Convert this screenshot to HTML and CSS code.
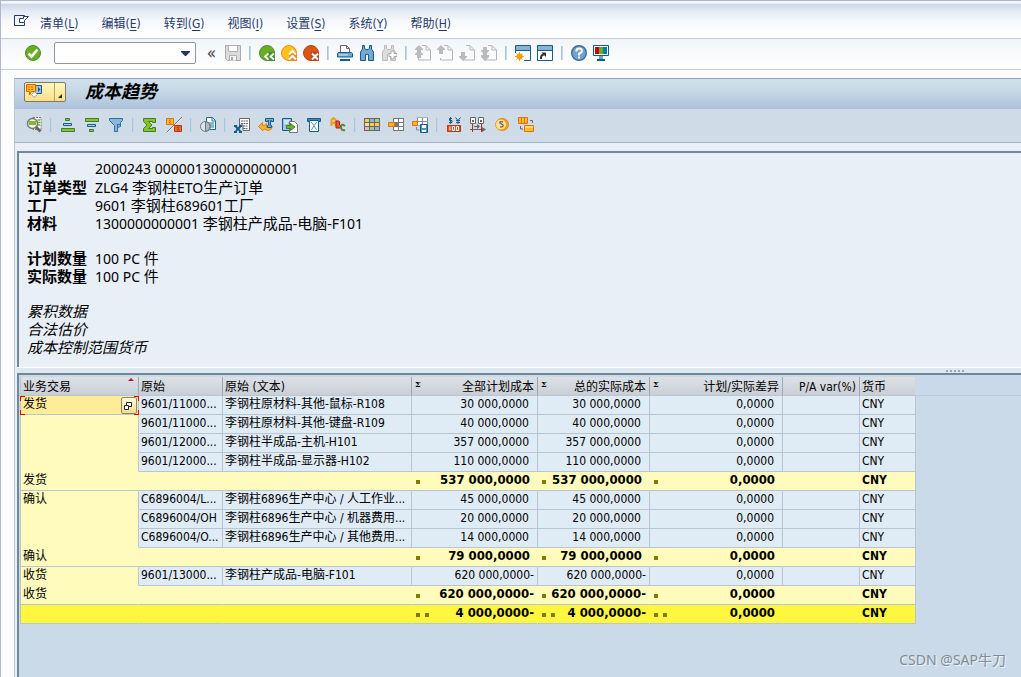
FILE: index.html
```html
<!DOCTYPE html>
<html lang="zh-CN">
<head>
<meta charset="utf-8">
<title>成本趋势</title>
<link rel="stylesheet" href="styles.css">
</head>
<body>
<svg class="defs" aria-hidden="true">
  <symbol id="doc" viewBox="0 0 16 16"><path d="M7 .5h4l4.500 4.500v10H3.500V13M11 1v4h4" fill="none" stroke="#b5b5b5"/></symbol>
  <symbol id="sigma" viewBox="0 0 16 16"><path d="M1.500 1.500h12v4h-3v-1h-4L10 8l-3.500 3.500h4v-1h3v4h-12v-3L5 8 1.500 4.500z" fill="#8cc21f" stroke="#3f7d3b"/></symbol>
</svg>

<nav class="menubar">
  <svg class="exit" viewBox="0 0 16 14"><path d="M10.500 2.500V1.500H.5v10h10V9" fill="none" stroke="#24386b"/><path d="M5.500 8.500v-4h4v-2h5l-4 4v2z" fill="#fff" stroke="#24386b"/></svg>
  <button>清单(<u>L</u>)</button>
  <button>编辑(<u>E</u>)</button>
  <button>转到(<u>G</u>)</button>
  <button>视图(<u>I</u>)</button>
  <button>设置(<u>S</u>)</button>
  <button>系统(<u>Y</u>)</button>
  <button>帮助(<u>H</u>)</button>
</nav>

<div class="toolbar system">
  <button aria-label="确认"><svg viewBox="0 0 16 16"><circle cx="8" cy="8" r="7.500" fill="#66b020" stroke="#4b8a37"/><path d="M3.500 8.500l3 3 6-7" fill="none" stroke="#fff" stroke-width="2.600"/></svg></button>
  <div class="combo"><input type="text" aria-label="命令"><button aria-label="命令历史"><svg viewBox="0 0 9 5"><path d="M0 0h9v1L5 5H4L0 1z" fill="#24386b"/></svg></button></div>
  <button class="collapse" aria-label="折叠">«</button>
  <button aria-label="保存"><svg viewBox="0 0 16 16"><path d="M.5.5h15v15H2.500l-2-2z" fill="#dcdcdc" stroke="#aaa"/><path d="M3.500.5h9v6h-9z" fill="#fff" stroke="#b0b0b0"/><path d="M4.500 15.500v-5h7v5" fill="#f4f4f4" stroke="#b0b0b0"/><path d="M6 12h2v3H6z" fill="#aaa"/></svg></button>
  <i class="sep"></i>
  <button aria-label="返回"><svg viewBox="0 0 16 16"><circle cx="8" cy="8" r="7.500" fill="#66b020" stroke="#4b8a37"/><path d="M9 7h7v9H9z" fill="#4b8a37"/><path d="M9.500 8.500l-3.500 3 3.500 3M15 8.500l-3.500 3 3.500 3" fill="none" stroke="#fff" stroke-width="1.800"/></svg></button>
  <button aria-label="退出"><svg viewBox="0 0 16 16"><circle cx="8" cy="8" r="7.500" fill="#fdc21a" stroke="#ec8a19"/><path d="M8 8l3.500-3L16 8v8H8z" fill="#ec8a19"/><path d="M8 9.500l3.500-3.500L15 9.500M8 14.500l3.500-3.500 3.500 3.500" fill="none" stroke="#fff" stroke-width="2"/></svg></button>
  <button aria-label="取消"><svg viewBox="0 0 16 16"><circle cx="8" cy="8" r="7.500" fill="#d95515" stroke="#b8431c"/><path d="M8 7h8v9H8z" fill="#b8431c"/><path d="M9 8.500l6 6m0-6l-6 6" stroke="#fff" stroke-width="2"/></svg></button>
  <i class="sep"></i>
  <button aria-label="打印"><svg viewBox="0 0 16 16"><path d="M3.500 7.500v-7h6l3 3v4" fill="#fff" stroke="#666"/><path d="M9.500.5v3h3" fill="none" stroke="#666"/><path d="M.5 12V8.500l1-1h13l1 1V12z" fill="#7ba7ce" stroke="#0f5f8d"/><path d="M2 10h9" stroke="#d7e6f2"/><path d="M3 14h10v2H3z" fill="#0f5f8d"/></svg></button>
  <button aria-label="查找"><svg viewBox="0 0 16 16"><path d="M3.500.5h2v3l1.500 1h2l1.500-1v-3h2V4l2 3v8.500H9.500v-6h-3v6h-5V7l2-3z" fill="#7ba7ce" stroke="#0f5f8d"/></svg></button>
  <button aria-label="继续查找"><svg viewBox="0 0 16 16"><path d="M3.500.5h2v3l1.500 1h2l1.500-1v-3h2V4l2 3v8.500H9.500v-6h-3v6h-5V7l2-3z" fill="#ddd" stroke="#bcbcbc"/><path d="M10 6h3v2.500h3v3h-3V14h-3v-2.500H8v-3h2z" fill="#fff" stroke="#aaa"/></svg></button>
  <i class="sep"></i>
  <button aria-label="首页"><svg viewBox="0 0 16 16"><use href="#doc"/><path d="M4 0l4 4v1H6v2l2 2v1H6v3H2v-3H0V9l2-2V5H0V4z" fill="#bbb"/></svg></button>
  <button aria-label="上页"><svg viewBox="0 0 16 16"><use href="#doc"/><path d="M4 0l4 4v1H6v4H2V5H0V4z" fill="#bbb"/></svg></button>
  <button aria-label="下页"><svg viewBox="0 0 16 16"><use href="#doc"/><path d="M2 7h4v4h2v1l-4 4-4-4v-1h2z" fill="#bbb"/></svg></button>
  <button aria-label="末页"><svg viewBox="0 0 16 16"><use href="#doc"/><path d="M2 2h4v3h2v1L6 8v2h2v2l-4 4-4-4v-2h2V8L0 6V5h2z" fill="#bbb"/></svg></button>
  <i class="sep"></i>
  <button aria-label="新会话"><svg viewBox="0 0 16 16"><path d="M.5.5h15v15H9M.5.5V8" fill="#fff" stroke="#0f5f8d"/><path d="M1 1h14v4H1z" fill="#8ab2d6"/><path d="M0 5.500h16" stroke="#0f5f8d"/><circle cx="4.500" cy="11.500" r="3" fill="#f6a000"/><path d="M4.500 7v9M0 11.500h9M1.500 8.500l6 6m0-6l-6 6" stroke="#f6a000"/></svg></button>
  <button aria-label="快捷方式"><svg viewBox="0 0 16 16"><path d="M.5.5h15v15H.5z" fill="#fff" stroke="#0f5f8d"/><path d="M1 1h14v4H1z" fill="#8ab2d6"/><path d="M0 5.500h16" stroke="#0f5f8d"/><path d="M4 14q-.5-4 3-4.500" fill="none" stroke="#333" stroke-width="2"/><path d="M4.500 7.500H9V12z" fill="#333"/></svg></button>
  <i class="sep"></i>
  <button aria-label="帮助"><svg viewBox="0 0 16 16"><circle cx="8" cy="8" r="7.300" fill="#72a2cb" stroke="#326f9f" stroke-width="1.400"/><path d="M5.300 6.500q0-3 2.800-3t2.800 2.300T8 8.500v2M8 11.500v2" fill="none" stroke="#fff" stroke-width="1.900"/></svg></button>
  <button aria-label="定制布局"><svg viewBox="0 0 16 16"><path d="M.5.500h15v10H.5z" fill="#fff" stroke="#0f5f8d"/><path d="M2 2h4v7H2z" fill="#c00"/><path d="M6 2h4v7H6z" fill="#69b017"/><path d="M10 2h4v7h-4z" fill="#0a78bd"/><path d="M6 11h4v3H6z" fill="#6ba1cc"/><path d="M4 15h8" stroke="#0f5f8d" stroke-width="2"/></svg></button>
</div>

<main class="workspace">
  <header class="titlebar">
    <button class="objects" aria-label="对象服务"><svg class="obj" viewBox="0 0 17 14"><path d="M9.500 1.500h6v8h-6z" fill="#9cc3df" stroke="#0f5f8d"/><path d="M12 3l2.500 2.500L12 8z" fill="#0f5f8d"/><path d="M.5.5h9v7h-4l-2 3.500V7.500h-3z" fill="#fdc21a" stroke="#e05a12"/><path d="M2 3h6M2 5.500h6" stroke="#e05a12" stroke-dasharray="2 1"/><path d="M5.500 10.500l3.500-3 2.500 3-3.500 3z" fill="#fff" stroke="#9e9e9e"/></svg><span class="drop"><svg viewBox="0 0 4 4"><path d="M4 0v4H0z" fill="#222"/></svg></span></button>
    <h1>成本趋势</h1>
  </header>
  <div class="toolbar app">
    <button aria-label="细节"><svg viewBox="0 0 16 16"><path d="M7 .5h8v12H7z" fill="#fff" stroke="#777" stroke-dasharray="2 1"/><path d="M11.500 3H14M12 5.500h2M12 8h2" stroke="#69a821" stroke-width="1.500"/><circle cx="6.500" cy="6.500" r="5" fill="#f3f7f0" stroke="#777" stroke-width="1.500"/><path d="M3 4h7v4H3z" fill="#80bb29"/><path d="M10 10l4.500 4.500" stroke="#666" stroke-width="3"/></svg></button>
    <i class="sep"></i>
    <button aria-label="升序"><svg viewBox="0 0 16 16"><path d="M5.500 1.500h4v2h-4z" fill="#8cc21f" stroke="#3f7d3b"/><path d="M3.500 6.500h8v2h-8z" fill="#b3d1e8" stroke="#0f5f8d"/><path d="M1.500 11.500h13v3h-13z" fill="#8cc21f" stroke="#3f7d3b"/></svg></button>
    <button aria-label="降序"><svg viewBox="0 0 16 16"><path d="M1.500 1.500h13v3h-13z" fill="#8cc21f" stroke="#3f7d3b"/><path d="M3.500 7.500h8v2h-8z" fill="#b3d1e8" stroke="#0f5f8d"/><path d="M5.500 12.500h4v2h-4z" fill="#8cc21f" stroke="#3f7d3b"/></svg></button>
    <button aria-label="过滤器"><svg viewBox="0 0 16 16"><path d="M1.500 1.500h13v2l-2 2v4l-3 1v4h-3V8.500l-5-5z" fill="#8db7d8" stroke="#2a719f"/><path d="M9.500 7v4M9.500 7.500h3" stroke="#2a719f"/></svg></button>
    <i class="sep"></i>
    <button aria-label="总计"><svg viewBox="0 0 16 16"><use href="#sigma"/></svg></button>
    <button aria-label="小计"><svg viewBox="0 0 16 16"><path d="M16.500 0L1 15.500" stroke="#fff"/><path d="M16 0L.5 15.500" stroke="#777"/><path d="M.5 1.500h7v6h-7z" fill="#fdc21a" stroke="#e86c17"/><path d="M5.500 3H3l1.500 1.500L3 6h2.500" fill="none" stroke="#e86c17"/><path d="M8.500 8.500h7v6h-7z" fill="#e86a20" stroke="#b83a15"/><path d="M13.500 10H11l1.500 1.500L11 13h2.500" fill="none" stroke="#b83a15"/></svg></button>
    <i class="sep"></i>
    <button aria-label="打印预览"><svg viewBox="0 0 16 16"><path d="M6.500.5h6l3 3v9h-9z" fill="#fff" stroke="#0f6c9c"/><path d="M12 1v3h3M9 6h5M9 8h5M9 10h5" fill="none" stroke="#1577a8"/><circle cx="5.500" cy="9.500" r="5" fill="#dbe6ee" stroke="#777"/><path d="M5.500 5v9a4.500 4.500 0 000-9" fill="#a8bdca" stroke="#777"/></svg></button>
    <i class="sep"></i>
    <button aria-label="电子表格"><svg viewBox="0 0 16 16"><path d="M5.500 1.500h10v12H9V8H5.500z" fill="#fff" stroke="#666"/><path d="M7 4h7M7 6.500h7M9 9h5M9 11.500h5" stroke="#666" stroke-dasharray="2 .5"/><path d="M0 8h3v1l1 1.500L5 9V8h3v2H7l-1.500 2L7 14h1v2H5v-1.500L4 13l-1 1.500V16H0v-2h1l1.500-2L1 10H0z" fill="#0f5f8d"/></svg></button>
    <button aria-label="字处理"><svg viewBox="0 0 16 16"><path d="M.5 9.500l4-4v3q3 0 4-2v4l6-1q-1 4-5 4-3-3-5 0z" fill="#fcb51a" stroke="#e57b1b"/><path d="M7.500 1.500h8v3h-2v-1h-1v5h1v2h-4v-2h1v-5h-1v1h-2z" fill="#7eaed2" stroke="#0f5f8d"/></svg></button>
    <button aria-label="本地文件"><svg viewBox="0 0 16 16"><path d="M.5 1.500h9v12h-9z" fill="#a1c5df" stroke="#0f5f8d"/><path d="M2 4h6M2 6h4" stroke="#fff"/><path d="M7.500 4.500h5l3 3v8h-8z" fill="#fff" stroke="#777"/><path d="M4.500 8.500h4v-2l4.500 3.500-4.500 3.500v-2h-4z" fill="#6fb51d" stroke="#3f7d3b"/></svg></button>
    <button aria-label="邮件收件人"><svg viewBox="0 0 16 16"><path d="M1.500 1.500h13v3h-13z" fill="#7fadcf" stroke="#0f5f8d"/><path d="M3.500 3.500h9v11h-9z" fill="#fff" stroke="#0f5f8d"/><path d="M5 5l3 3.500L11 5M5.500 13L8 8.500l2.500 4.500" fill="none" stroke="#5d94ba"/><path d="M2 3h12" stroke="#0f5f8d"/></svg></button>
    <button aria-label="ABC 分析"><svg viewBox="0 0 16 16"><path d="M1.500 9V3l2-2 2 2v6M2 6h4" fill="none" stroke="#f49a16" stroke-width="2"/><path d="M6 4h3l1 2-1 1 2 2-1 2H6z" fill="#e35d20" stroke="#a91c1c"/><path d="M15 9q-4-3-4 1t4 3" fill="none" stroke="#55863d" stroke-width="2"/></svg></button>
    <i class="sep"></i>
    <button aria-label="更改布局"><svg viewBox="0 0 16 16"><path d="M0 1h16v13H0z" fill="#666"/><path d="M1 2h4v3H1zM6 6h4v3H6zM11 6h4v3h-4z" fill="#f8ca53"/><path d="M6 2h4v3H6zM11 10h4v3h-4z" fill="#8fb6d7"/><path d="M11 2h4v3h-4zM6 10h4v3H6z" fill="#a9cc84"/><path d="M1 6h4v3H1z" fill="#fbe094"/><path d="M1 10h4v3H1z" fill="#efb5bd"/></svg></button>
    <button aria-label="选择布局"><svg viewBox="0 0 16 16"><path d="M5 1h11v13H5z" fill="#777"/><path d="M6 2h4v3H6zM11 2h4v3h-4zM11 6h4v3h-4zM6 10h4v3H6zM11 10h4v3h-4z" fill="#fff"/><path d="M.5 5.500h6v4h-6z" fill="#fdb71b" stroke="#e86c17"/></svg></button>
    <button aria-label="保存布局"><svg viewBox="0 0 16 16"><path d="M5 .5h11v8H5z" fill="#888"/><path d="M6 1h4v3H6zM11 1h4v3h-4zM6 5h4v3H6zM11 5h4v3h-4z" fill="#fff"/><path d="M.5 4.500h5v4h-5z" fill="#fdb71b" stroke="#e86c17"/><path d="M4.500 10v3h3" fill="none" stroke="#888"/><path d="M8.500 7.500h7v8h-7z" fill="#4e92bf" stroke="#0f5f8d"/><path d="M10 8h4v3h-4zM10 13h4v2h-4z" fill="#fff"/></svg></button>
    <i class="sep"></i>
    <button aria-label="货币"><svg viewBox="0 0 16 16"><path d="M6 1.500H3.500v2H6v2H3M4.500 0v7M9.500.5l2.500 3 2.500-3M12 3.500V7M10 3.500h4M10 5.500h4" fill="none" stroke="#0f5f8d"/><path d="M1.500 8.500h13v6h-13z" fill="#e0551e" stroke="#b43717"/><path d="M4 9.500v4M6.500 9.500h2v4h-2zM10.500 9.500h2v4h-2z" fill="none" stroke="#fff"/></svg></button>
    <button aria-label="期间"><svg viewBox="0 0 16 16"><path d="M.5.5h5v6h-5zM8.500.5h5v6h-5z" fill="#fff" stroke="#666"/><path d="M2 3h2v2H2zM10 3h2v2h-2zM0 12h13v1H0zM12 10l4 2.500-4 2.500zM4 9h4v1H4zM7 7l3 2.500L7 12z" fill="#666"/><path d="M2.500 7v8M11.500 7v8" stroke="#b92c1b"/></svg></button>
    <button aria-label="成本"><svg viewBox="0 0 16 16"><circle cx="8.500" cy="7.500" r="6" fill="#f8a51b" stroke="#e87e17"/><circle cx="7" cy="7.500" r="5.500" fill="#ffe38d" stroke="#ee931c"/><path d="M9 5q-4-1-3 1l3 2q1 2-3 2" fill="none" stroke="#666" stroke-width="1.300"/></svg></button>
    <button aria-label="层次"><svg viewBox="0 0 16 16"><path d="M.5.5h9v6h-9z" fill="#fdc21a" stroke="#e86c17"/><path d="M3.500 1v5M6.500 1v5" stroke="#e86c17"/><path d="M12 3.500h2.500V6M2.500 9v3H5" fill="none" stroke="#666"/><path d="M6.500 8.500h9v6h-9z" fill="#fdc21a" stroke="#e86c17"/><path d="M7 10h8" stroke="#fff3c4"/></svg></button>
  </div>

  <section class="info">
    <dl>
      <dt>订单</dt><dd>2000243 000001300000000001</dd>
      <dt>订单类型</dt><dd>ZLG4 <span class="han">李钢柱</span>ETO<span class="han">生产订单</span></dd>
      <dt>工厂</dt><dd>9601 <span class="han">李钢柱</span>689601<span class="han">工厂</span></dd>
      <dt>材料</dt><dd>1300000000001 <span class="han">李钢柱产成品</span>-<span class="han">电脑</span>-F101</dd>
    </dl>
    <dl>
      <dt>计划数量</dt><dd>100 PC <span class="han">件</span></dd>
      <dt>实际数量</dt><dd>100 PC <span class="han">件</span></dd>
    </dl>
    <div class="notes"><p>累积数据</p><p>合法估价</p><p>成本控制范围货币</p></div>
  </section>

  <div class="splitter"><span class="grip"></span></div>

  <section class="grid">
    <table>
      <colgroup><col class="c-biz"><col class="c-origin"><col class="c-text"><col class="c-plan"><col class="c-actual"><col class="c-diff"><col class="c-var"><col class="c-cur"></colgroup>
      <thead>
        <tr><th class="sorted">业务交易</th><th>原始</th><th>原始 (文本)</th><th class="num sum">全部计划成本</th><th class="num sum">总的实际成本</th><th class="num sum">计划/实际差异</th><th class="num">P/A var(%)</th><th>货币</th></tr>
      </thead>
      <tbody>
        <tr><td class="key selected">发货<button aria-label="选择"><svg viewBox="0 0 8 8"><path d="M2.500.5h5v4h-5z" fill="#fff" stroke="#222"/><path d="M.5 3.500h4v4h-4z" fill="#fff" stroke="#222"/></svg></button></td><td>9601/11000...</td><td>李钢柱原材料-其他-鼠标-R108</td><td class="num">30 000,0000</td><td class="num">30 000,0000</td><td class="num">0,0000</td><td></td><td>CNY</td></tr>
        <tr><td class="key"></td><td>9601/11000...</td><td>李钢柱原材料-其他-键盘-R109</td><td class="num">40 000,0000</td><td class="num">40 000,0000</td><td class="num">0,0000</td><td></td><td>CNY</td></tr>
        <tr><td class="key"></td><td>9601/12000...</td><td>李钢柱半成品-主机-H101</td><td class="num">357 000,0000</td><td class="num">357 000,0000</td><td class="num">0,0000</td><td></td><td>CNY</td></tr>
        <tr><td class="key"></td><td>9601/12000...</td><td>李钢柱半成品-显示器-H102</td><td class="num">110 000,0000</td><td class="num">110 000,0000</td><td class="num">0,0000</td><td></td><td>CNY</td></tr>
        <tr class="sub"><td class="name">发货</td><td></td><td></td><td class="num lvl1">537 000,0000</td><td class="num lvl1">537 000,0000</td><td class="num lvl1">0,0000</td><td></td><td>CNY</td></tr>
        <tr><td class="key">确认</td><td>C6896004/L...</td><td>李钢柱6896生产中心 / 人工作业...</td><td class="num">45 000,0000</td><td class="num">45 000,0000</td><td class="num">0,0000</td><td></td><td>CNY</td></tr>
        <tr><td class="key"></td><td>C6896004/OH</td><td>李钢柱6896生产中心 / 机器费用...</td><td class="num">20 000,0000</td><td class="num">20 000,0000</td><td class="num">0,0000</td><td></td><td>CNY</td></tr>
        <tr><td class="key"></td><td>C6896004/O...</td><td>李钢柱6896生产中心 / 其他费用...</td><td class="num">14 000,0000</td><td class="num">14 000,0000</td><td class="num">0,0000</td><td></td><td>CNY</td></tr>
        <tr class="sub"><td class="name">确认</td><td></td><td></td><td class="num lvl1">79 000,0000</td><td class="num lvl1">79 000,0000</td><td class="num lvl1">0,0000</td><td></td><td>CNY</td></tr>
        <tr><td class="key">收货</td><td>9601/13000...</td><td>李钢柱产成品-电脑-F101</td><td class="num neg">620 000,0000-</td><td class="num neg">620 000,0000-</td><td class="num">0,0000</td><td></td><td>CNY</td></tr>
        <tr class="sub"><td class="name">收货</td><td></td><td></td><td class="num neg lvl1">620 000,0000-</td><td class="num neg lvl1">620 000,0000-</td><td class="num lvl1">0,0000</td><td></td><td>CNY</td></tr>
        <tr class="sub total"><td></td><td></td><td></td><td class="num neg lvl2">4 000,0000-</td><td class="num neg lvl2">4 000,0000-</td><td class="num lvl2">0,0000</td><td></td><td>CNY</td></tr>
      </tbody>
    </table>
  </section>
</main>
<div class="watermark">CSDN @SAP牛刀</div>
</body>
</html>
```
FILE: styles.css
```css
* { box-sizing: border-box; }

body {
  margin: 0;
  min-height: 100vh;
  display: flex;
  flex-direction: column;
  border-left: 1px solid #b0b9cc;
  background: #fbfcfe;
  color: #000;
  font: 12px/18px "DejaVu Sans Condensed", "Noto Sans", "Noto Sans CJK SC", sans-serif;
}

button {
  padding: 0;
  border: 0;
  background: none;
  color: inherit;
  font: inherit;
  flex: none;
}

svg { display: block; }
.defs { position: absolute; width: 0; height: 0; }

/* menu */
.menubar {
  display: flex;
  align-items: center;
  gap: 23px;
  height: 39px;
  padding: 9px 0 0 13px;
  border-top: 1px solid #b0b9cc;
  border-bottom: 1px solid #c6ccd6;
  background: linear-gradient(#e8edf5 0, #fff 2px, #cbd7e7 3px, #e3eaf3 10px, #f6f8fc 20px, #fff 32px);
  color: #24386b;
}
.exit { width: 16px; height: 14px; margin: -7px -13px 0 0; }
.menubar u { text-underline-offset: 2px; }

/* toolbars */
.toolbar { display: flex; align-items: center; }
.toolbar > button { width: 16px; height: 16px; }
.toolbar > button svg { width: 16px; height: 16px; }
.sep { width: 2px; height: 14px; background: #a9c5de; border-right: 1px solid #c5d8e9; }

.system {
  gap: 6px;
  height: 31px;
  padding: 0 0 2px 24px;
  border-bottom: 1px solid #c6ccd6;
  background: linear-gradient(#f2f5f9, #fff);
}
.system .sep { margin: 0 2px; }
.combo {
  display: flex;
  align-items: center;
  width: 142px;
  height: 22px;
  margin: 0 2px 0 7px;
  padding-right: 5px;
  border: 1px solid #8d97a6;
  border-radius: 2px;
  background: #fff;
}
.combo input { flex: 1; min-width: 0; height: 18px; border: 0; padding: 0 4px; outline: 0; background: none; font: inherit; }
.combo svg { width: 9px; height: 5px; }
.toolbar .collapse { width: 15px; font-size: 17px; line-height: 14px; color: #444; }

/* workspace */
.workspace {
  flex: 1;
  display: flex;
  flex-direction: column;
  margin: 8px 0 0 13px;
  border-left: 1px solid #b9c5d2;
  border-top: 1px solid #93a3b9;
  background: #e8eff7;
}
.titlebar {
  display: flex;
  align-items: center;
  gap: 19px;
  height: 30px;
  padding: 0 0 4px 9px;
  background: linear-gradient(#d3e1ed, #c3d5e4 50%, #a9c1da);
}
.titlebar h1 { margin: 0; font-size: 18px; line-height: 24px; font-style: italic; font-weight: bold; }
.objects {
  display: flex;
  width: 42px;
  height: 20px;
  border: 1px solid #7d7a68;
  border-radius: 2px;
  background: linear-gradient(#fff7c0, #fbdf86);
}
.obj { width: 17px; height: 14px; margin: 1px; }
.drop { display: flex; align-items: flex-end; justify-content: flex-end; width: 11px; height: 18px; margin-left: auto; padding: 3px; border-left: 1px solid #b5a66d; }
.drop svg { width: 4px; height: 4px; }
.app {
  gap: 8px;
  height: 34px;
  padding: 0 0 2px 11px;
  border-bottom: 1px solid #a3b4c5;
  background: #cfdce7;
}

/* order data */
.info {
  display: flex;
  flex-direction: column;
  gap: 17px;
  margin: 8px 0 0 2px;
  padding: 7px 8px 11px;
  border-left: 2px solid #6f8999;
  border-top: 2px solid #6f8999;
  font: 14px/18px "Noto Sans", "Noto Sans CJK SC", sans-serif;
}
.info dl { display: grid; grid-template-columns: 68px 1fr; grid-auto-rows: 18px; margin: 0; }
.info dt { font-size: 15px; font-weight: bold; }
.info dd { margin: 0; }
.han { font-size: 15px; }
.notes { font-size: 15px; font-style: italic; }
.notes p { margin: 0; }

.splitter {
  display: flex;
  align-items: center;
  justify-content: flex-end;
  height: 6px;
  margin-left: 2px;
  padding-right: 56px;
  border-top: 1px solid #fff;
  background: #dde7ed;
}
.grip { width: 19px; height: 2px; background: repeating-linear-gradient(90deg, #9aa8b3 0 2px, transparent 2px 4px); }

/* cost grid */
.grid {
  flex: 1;
  margin-left: 2px;
  padding: 2px 0 0 1px;
  border-left: 2px solid #6f8999;
  border-top: 2px solid #6f8999;
  background: linear-gradient(#c9d9e9 20px, #bccbdc 20px 21px, #cbdae9 21px);
}
.grid table { width: 896px; table-layout: fixed; border-collapse: separate; border-spacing: 0; border-left: 1px solid #b9c5d2; }
.c-biz { width: 118px; }
.c-origin { width: 84px; }
.c-text { width: 189px; }
.c-plan { width: 126px; }
.c-actual { width: 112px; }
.c-diff { width: 133px; }
.c-var { width: 77px; }
.c-cur { width: 56px; }
.grid th, .grid td {
  position: relative;
  height: 19px;
  padding: 0 2px;
  border-right: 1px solid #b9c5d2;
  border-bottom: 1px solid #b9c5d2;
  background: #dfebf5;
  line-height: 16px;
  text-align: left;
  vertical-align: top;
  white-space: nowrap;
}
.grid th { font-weight: normal; padding-top: 2px; border-right-color: #9ea8b4; background: linear-gradient(#dce1e6, #d2d7dd 60%, #c9ced5); }
.grid th:last-child { border-right-color: #d2d7dd; }
.grid .num { text-align: right; }
.grid th.num { padding-right: 3px; }
.grid td.num { padding-right: 8px; }
.grid td.neg { padding-right: 3px; }
.sum::before { content: "Σ"; position: absolute; left: 3px; top: -1px; font: bold 8px/16px "DejaVu Serif", serif; }
.sorted::after { content: ""; position: absolute; right: 4px; top: 1px; border: 3px solid transparent; border-top: 0; border-bottom-color: #c8102e; }

.grid .key { background: #fffbbd; border-bottom-color: #fffbbd; }
.grid .sub td { background: #fffbbd; border-right-color: #fffbbd; font-weight: bold; font-size: 13px; }
.grid .sub td:last-child { font-size: 12px; border-right-color: #b9c5d2; }
.grid .sub .num { padding-right: 7px; }
.grid .sub .neg { padding-right: 3px; }
.grid .sub .name { font-size: 12px; font-weight: normal; }
.grid .total td { background: #fff73f; border-right-color: #fff73f; }
.grid .total td:last-child { border-right-color: #b9c5d2; }
.lvl1::before, .lvl2::before { content: ""; position: absolute; left: 4px; top: 8px; width: 4px; height: 4px; background: #857a00; }
.lvl2::after { content: ""; position: absolute; left: 13px; top: 8px; width: 4px; height: 4px; background: #857a00; }

.grid .selected { background: #ffec98; border-bottom-color: #b9c5d2; }
.selected::before {
  content: "";
  position: absolute;
  inset: 0 -1px -1px;
  background:
    linear-gradient(#e00, #e00) 0 0 / 5px 1px, linear-gradient(#e00, #e00) 0 0 / 1px 5px,
    linear-gradient(#e00, #e00) 100% 0 / 5px 1px, linear-gradient(#e00, #e00) 100% 0 / 1px 5px,
    linear-gradient(#e00, #e00) 0 100% / 5px 1px, linear-gradient(#e00, #e00) 0 100% / 1px 5px,
    linear-gradient(#e00, #e00) 100% 100% / 5px 1px, linear-gradient(#e00, #e00) 100% 100% / 1px 5px;
  background-repeat: no-repeat;
}
.selected button {
  position: absolute;
  right: 1px;
  top: 1px;
  width: 16px;
  height: 17px;
  padding: 0 0 0 2px;
  border: 1px solid #8b876f;
  border-radius: 2px;
  background: linear-gradient(#fffbe0, #f8dc88);
}
.selected svg { width: 8px; height: 8px; }

.watermark {
  position: absolute;
  right: 15px;
  bottom: 7px;
  color: #808b96;
  font: 14px/20px "Noto Sans", "Noto Sans CJK SC", sans-serif;
  text-shadow: 1px 1px 0 #eef3f8;
}
```
